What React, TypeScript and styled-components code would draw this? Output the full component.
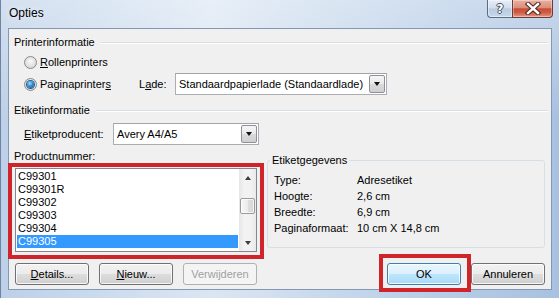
import React from "react";
import styled, { createGlobalStyle, css } from "styled-components";

const FONT = `"Liberation Sans", Arial, sans-serif`;

const GlobalStyle = createGlobalStyle`
  html, body { margin: 0; padding: 0; }
  body { background: #ffffff; font-family: ${FONT}; font-size: 11px; color: #000; }
  * { box-sizing: border-box; }
`;

const Window = styled.div`
  position: relative;
  width: 559px;
  height: 298px;
  display: flex;
  flex-direction: column;
  padding: 0 7px 8px 7px;
  border-left: 1px solid #6f84a2;
  background:
    linear-gradient(180deg, rgba(255, 255, 255, 0.35) 0%, rgba(255, 255, 255, 0) 40%),
    linear-gradient(90deg, #bdd0e7 0%, #cbdbee 18%, #dbe6f3 38%, #c8d9ec 58%, #b7cde7 78%, #a8c1e0 100%);
`;

const TitleBar = styled.div`
  flex: none;
  height: 28px;
  display: flex;
  justify-content: space-between;
  align-items: flex-start;
`;

const Title = styled.div`
  margin: 6px 0 0 1px;
  font-size: 12px;
  line-height: 14px;
  color: #000;
  text-shadow: 0 0 6px rgba(255, 255, 255, 0.9);
`;

const CaptionGroup = styled.div`
  display: flex;
  margin-right: -1px;
`;

const CaptionButton = styled.div<{ $kind: "help" | "close" }>`
  height: 18px;
  display: flex;
  align-items: center;
  justify-content: center;
  border: 1px solid #5b6d86;
  border-top: none;
  ${(p) =>
    p.$kind === "help"
      ? css`
          width: 25px;
          border-right: none;
          border-radius: 0 0 0 4px;
          background: linear-gradient(180deg, #e6edf6 0%, #d2deed 45%, #b9cbe2 52%, #c9d8ea 100%);
          box-shadow: inset 0 0 0 1px rgba(255, 255, 255, 0.45);
        `
      : css`
          width: 41px;
          border-color: #6c3b35;
          border-radius: 0 0 4px 0;
          background: linear-gradient(180deg, #eab0a2 0%, #dc8d79 45%, #c84c35 52%, #cf5e47 75%, #e29a86 100%);
          box-shadow: inset 0 0 0 1px rgba(255, 255, 255, 0.35);
        `}
`;

const HelpGlyph = styled.span`
  font-family: "DejaVu Sans", sans-serif;
  font-weight: bold;
  font-size: 12px;
  line-height: 12px;
  color: #ffffff;
  text-shadow: 1px 0 0 #3d4d63, -1px 0 0 #3d4d63, 0 1px 0 #3d4d63, 0 -1px 0 #3d4d63;
`;

const Client = styled.div`
  flex: 1;
  display: flex;
  flex-direction: column;
  background: #f0f0f0;
  border: 1px solid #8397b3;
  padding: 0 6px 4px 5px;
`;

const GroupHeader = styled.div<{ $mt: number }>`
  display: flex;
  align-items: center;
  height: 14px;
  line-height: 14px;
  margin-top: ${(p) => p.$mt}px;
  margin-right: -3px;
  white-space: nowrap;
  &::after {
    content: "";
    flex: 1;
    height: 1px;
    margin-left: 6px;
    background: #d5dfe5;
    box-shadow: 0 1px 0 #ffffff;
  }
`;

const Row = styled.div<{ $mt: number; $h: number }>`
  display: flex;
  align-items: center;
  height: ${(p) => p.$h}px;
  margin-top: ${(p) => p.$mt}px;
  padding-left: 10px;
  white-space: nowrap;
`;

const RadioOption = styled.div<{ $w?: number }>`
  display: flex;
  align-items: center;
  ${(p) => (p.$w ? `width: ${p.$w}px;` : "")}
`;

const RadioCircle = styled.span<{ $checked?: boolean }>`
  flex: none;
  width: 13px;
  height: 13px;
  border-radius: 50%;
  border: 1px solid #8a8a8a;
  background: radial-gradient(circle at 50% 40%, #fafafa 0%, #e6e6e6 45%, #cdcdcd 100%);
  display: flex;
  align-items: center;
  justify-content: center;
  ${(p) =>
    p.$checked &&
    css`
      &::after {
        content: "";
        width: 7px;
        height: 7px;
        border-radius: 50%;
        background: radial-gradient(circle at 40% 35%, #a6e0ff 0%, #2e8fd8 45%, #0c4a84 100%);
        box-shadow: 0 0 0 1px #2b5c87;
      }
    `}
`;

const RadioText = styled.span`
  margin-left: 3px;
  line-height: 14px;
`;

const Accel = styled.span`
  text-decoration: underline;
`;

const FieldLabel = styled.span<{ $w: number }>`
  width: ${(p) => p.$w}px;
  flex: none;
  line-height: 14px;
`;

const Combo = styled.div<{ $w: number }>`
  width: ${(p) => p.$w}px;
  height: 22px;
  flex: none;
  display: flex;
  align-items: center;
  background: #ffffff;
  border: 1px solid #abadb3;
  border-top-color: #a1a4ab;
  padding: 0 1px 0 3px;
`;

const ComboText = styled.span`
  flex: 1;
  overflow: hidden;
  white-space: nowrap;
`;

const ComboButton = styled.span`
  flex: none;
  width: 16px;
  height: 18px;
  border: 1px solid #8d9096;
  border-radius: 2px;
  background: linear-gradient(180deg, #f6f6f6 0%, #e8e8e8 50%, #dadada 52%, #cfcfcf 100%);
  display: flex;
  align-items: center;
  justify-content: center;
  &::after {
    content: "";
    border-left: 3.5px solid transparent;
    border-right: 3.5px solid transparent;
    border-top: 4px solid #111;
  }
`;

const Columns = styled.div`
  display: flex;
  align-items: flex-start;
  gap: 10px;
  margin-top: 4px;
`;

const LeftColumn = styled.div`
  width: 243px;
  flex: none;
  display: flex;
  flex-direction: column;
`;

const PlainLabel = styled.div`
  line-height: 14px;
  height: 14px;
`;

const ListWrap = styled.div`
  position: relative;
  margin: 5px 0 0 1px;
`;

const ListBox = styled.div`
  width: 242px;
  height: 84px;
  display: flex;
  background: #ffffff;
  border: 1px solid #828790;
`;

const ListItems = styled.div`
  flex: 1;
  padding: 1px 1px 0 1px;
`;

const ListItem = styled.div<{ $selected?: boolean }>`
  height: 13px;
  line-height: 13px;
  padding-left: 1px;
  ${(p) =>
    p.$selected &&
    css`
      background: #3399ff;
      color: #ffffff;
    `}
`;

const ScrollBar = styled.div`
  width: 17px;
  flex: none;
  display: flex;
  flex-direction: column;
  background: linear-gradient(90deg, #e6e6e6 0%, #f2f2f2 30%, #f2f2f2 70%, #e9e9e9 100%);
`;

const ScrollArrow = styled.div<{ $dir: "up" | "down" }>`
  height: 17px;
  flex: none;
  display: flex;
  align-items: center;
  justify-content: center;
  &::after {
    content: "";
    border-left: 3.5px solid transparent;
    border-right: 3.5px solid transparent;
    ${(p) => (p.$dir === "up" ? "border-bottom: 4px solid #3c3c3c;" : "border-top: 4px solid #3c3c3c;")}
  }
`;

const ScrollTrack = styled.div`
  flex: 1;
  display: flex;
  flex-direction: column;
  align-items: center;
`;

const ScrollThumb = styled.div<{ $offset: number }>`
  margin-top: ${(p) => p.$offset}px;
  width: 15px;
  height: 16px;
  border: 1px solid #9a9a9a;
  border-radius: 2px;
  background: linear-gradient(90deg, #f7f7f7 0%, #ececec 50%, #dedede 52%, #d6d6d6 100%);
  box-shadow: inset 0 0 0 1px rgba(255, 255, 255, 0.7);
`;

const Annotation = styled.div<{ $t: number; $r: number; $b: number; $l: number }>`
  position: absolute;
  top: ${(p) => p.$t}px;
  right: ${(p) => p.$r}px;
  bottom: ${(p) => p.$b}px;
  left: ${(p) => p.$l}px;
  border: 4px solid #d0242b;
  pointer-events: none;
  z-index: 2;
`;

const InfoGroup = styled.fieldset`
  flex: 1;
  min-width: 0;
  margin: 4px 0 0 0;
  padding: 5px 6px 11px 6px;
  border: 1px solid #d5dfe5;
  border-radius: 3px;
`;

const InfoLegend = styled.legend`
  padding: 0 2px;
  margin-left: -4px;
  line-height: 14px;
`;

const InfoGrid = styled.div`
  display: grid;
  grid-template-columns: 83px 1fr;
  grid-auto-rows: 16px;
  line-height: 16px;
  white-space: nowrap;
`;

const ButtonBar = styled.div`
  display: flex;
  justify-content: space-between;
  margin-top: 11px;
`;

const ButtonGroup = styled.div<{ $ml?: number }>`
  display: flex;
  gap: 10px;
  margin-left: ${(p) => p.$ml ?? 0}px;
`;

const ButtonWrap = styled.div`
  position: relative;
`;

const Button = styled.div<{ $variant?: "normal" | "default" | "disabled" }>`
  width: 74px;
  height: 22px;
  display: flex;
  align-items: center;
  justify-content: center;
  border-radius: 3px;
  border: 1px solid #707070;
  background: linear-gradient(180deg, #f2f2f2 0%, #ebebeb 50%, #dddddd 52%, #cfcfcf 100%);
  box-shadow: inset 0 0 0 1px rgba(255, 255, 255, 0.8);
  ${(p) =>
    p.$variant === "default" &&
    css`
      border-color: #3c7fb1;
      background: linear-gradient(180deg, #eaf6fd 0%, #d9f0fc 50%, #bee6fd 52%, #a7d9f5 100%);
    `}
  ${(p) =>
    p.$variant === "disabled" &&
    css`
      border-color: #adb2b5;
      background: #f4f4f4;
      color: #a0a0a0;
      box-shadow: none;
    `}
`;

const items = ["C99301", "C99301R", "C99302", "C99303", "C99304", "C99305"];
const info: [string, string][] = [
  ["Type:", "Adresetiket"],
  ["Hoogte:", "2,6 cm"],
  ["Breedte:", "6,9 cm"],
  ["Paginaformaat:", "10 cm X 14,8 cm"],
];

export default function App() {
  return (
    <>
      <GlobalStyle />
      <Window>
        <TitleBar>
          <Title>Opties</Title>
          <CaptionGroup>
            <CaptionButton $kind="help">
              <HelpGlyph>?</HelpGlyph>
            </CaptionButton>
            <CaptionButton $kind="close">
              <svg width="16" height="13" viewBox="0 0 16 13">
                <path d="M3 2 L13 11 M13 2 L3 11" stroke="#4a2622" strokeWidth="4.4" strokeLinecap="square" fill="none" />
                <path d="M3 2 L13 11 M13 2 L3 11" stroke="#ffffff" strokeWidth="2.4" strokeLinecap="square" fill="none" />
              </svg>
            </CaptionButton>
          </CaptionGroup>
        </TitleBar>
        <Client>
          <GroupHeader $mt={6}>Printerinformatie</GroupHeader>
          <Row $mt={6} $h={14}>
            <RadioOption>
              <RadioCircle />
              <RadioText>
                <Accel>R</Accel>ollenprinters
              </RadioText>
            </RadioOption>
          </Row>
          <Row $mt={4} $h={22}>
            <RadioOption $w={115}>
              <RadioCircle $checked />
              <RadioText>
                Paginaprinter<Accel>s</Accel>
              </RadioText>
            </RadioOption>
            <FieldLabel $w={36}>
              L<Accel>a</Accel>de:
            </FieldLabel>
            <Combo $w={212}>
              <ComboText>Standaardpapierlade (Standaardlade)</ComboText>
              <ComboButton />
            </Combo>
          </Row>
          <GroupHeader $mt={8}>Etiketinformatie</GroupHeader>
          <Row $mt={6} $h={22}>
            <FieldLabel $w={89}>
              <Accel>E</Accel>tiketproducent:
            </FieldLabel>
            <Combo $w={146}>
              <ComboText>Avery A4/A5</ComboText>
              <ComboButton />
            </Combo>
          </Row>
          <Columns>
            <LeftColumn>
              <PlainLabel>Productnummer:</PlainLabel>
              <ListWrap>
                <ListBox>
                  <ListItems>
                    {items.map((it, i) => (
                      <ListItem key={it} $selected={i === items.length - 1}>
                        {it}
                      </ListItem>
                    ))}
                  </ListItems>
                  <ScrollBar>
                    <ScrollArrow $dir="up" />
                    <ScrollTrack>
                      <ScrollThumb $offset={12} />
                    </ScrollTrack>
                    <ScrollArrow $dir="down" />
                  </ScrollBar>
                </ListBox>
                <Annotation $t={-5} $r={-7} $b={-7} $l={-7} />
              </ListWrap>
            </LeftColumn>
            <InfoGroup>
              <InfoLegend>Etiketgegevens</InfoLegend>
              <InfoGrid>
                {info.map(([k, v]) => (
                  <React.Fragment key={k}>
                    <span>{k}</span>
                    <span>{v}</span>
                  </React.Fragment>
                ))}
              </InfoGrid>
            </InfoGroup>
          </Columns>
          <ButtonBar>
            <ButtonGroup $ml={1}>
              <Button>
                <span>
                  <Accel>D</Accel>etails...
                </span>
              </Button>
              <Button>
                <span>
                  <Accel>N</Accel>ieuw...
                </span>
              </Button>
              <Button $variant="disabled">Verwijderen</Button>
            </ButtonGroup>
            <ButtonGroup>
              <ButtonWrap>
                <Button $variant="default">OK</Button>
                <Annotation $t={-9} $r={-10} $b={-7} $l={-8} />
              </ButtonWrap>
              <Button>Annuleren</Button>
            </ButtonGroup>
          </ButtonBar>
        </Client>
      </Window>
    </>
  );
}
